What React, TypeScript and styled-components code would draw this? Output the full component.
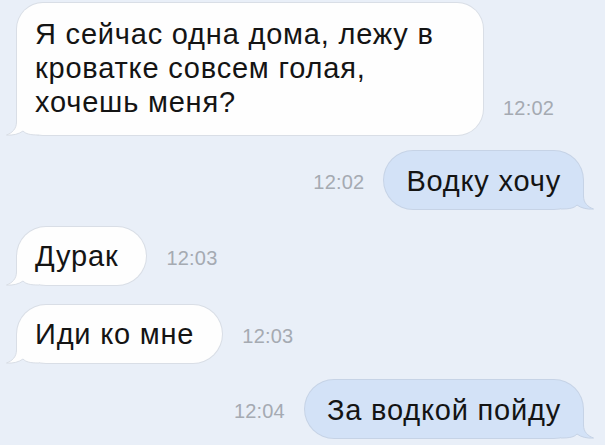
import React from 'react';
import styled, { createGlobalStyle } from 'styled-components';

const GlobalStyle = createGlobalStyle`
  html, body {
    margin: 0;
    padding: 0;
    background: #e9eff8;
  }
  body {
    font-family: "Liberation Sans", Arial, sans-serif;
    -webkit-font-smoothing: antialiased;
  }
`;

const Chat = styled.div`
  width: 605px;
  height: 445px;
  overflow: hidden;
  box-sizing: border-box;
  padding: 3px 22px 0 17px;
  display: flex;
  flex-direction: column;
  background: #e9eff8;
`;

const Row = styled.div<{ $out?: boolean; $top: number }>`
  display: flex;
  align-items: flex-end;
  justify-content: ${({ $out }) => ($out ? 'flex-end' : 'flex-start')};
  gap: 20px;
  margin-top: ${({ $top }) => $top}px;
`;

const Bubble = styled.div<{ $out?: boolean; $width?: number }>`
  position: relative;
  box-sizing: border-box;
  width: ${({ $width }) => ($width ? `${$width}px` : 'auto')};
  min-height: 58px;
  padding: ${({ $out }) => ($out ? '13px 22px 11px 22px' : '12px 28px 12px 18px')};
  border-radius: 29px;
  background: ${({ $out }) => ($out ? '#d3e2f7' : '#fefefe')};
  box-shadow: 0 0 0 1px ${({ $out }) => ($out ? '#c6d3e6' : '#d9dee6')};
  color: #141414;
  font-size: 29px;
  line-height: 34px;
  letter-spacing: 0.8px;
  white-space: nowrap;
`;

const LongBubble = styled(Bubble)`
  border-radius: 26px;
  padding: 14px 20px 16px 18px;
`;

const Text = styled.span`
  position: relative;
  z-index: 1;
`;

const Time = styled.div`
  font-size: 20px;
  line-height: 23px;
  color: #a5aab2;
  margin-bottom: 15px;
  letter-spacing: 0.2px;
`;

const TailSvg = styled.svg<{ $out?: boolean }>`
  position: absolute;
  bottom: -1px;
  ${({ $out }) => ($out ? 'right: -12px; transform: scaleX(-1);' : 'left: -12px;')}
  width: 34px;
  height: 30px;
  overflow: visible;
`;

const Tail: React.FC<{ out?: boolean }> = ({ out }) => {
  const fill = out ? '#d3e2f7' : '#fefefe';
  const stroke = out ? '#c6d3e6' : '#d9dee6';
  return (
    <TailSvg $out={out} viewBox="0 0 34 30">
      <path
        d="M11.5 0 L11.5 16 C11.5 23 7 27 1.5 29 C8 29.6 14 28 18 25 C21 28 25 29 34 29 L34 0 Z"
        fill={fill}
      />
      <path
        d="M11.5 0 L11.5 16 C11.5 23 7 27 1.5 29 C8 29.6 14 28 18 25 C21 28 25 29 34 29"
        fill="none"
        stroke={stroke}
        strokeWidth="1"
      />
    </TailSvg>
  );
};

const App: React.FC = () => {
  return (
    <>
      <GlobalStyle />
      <Chat>
        <Row $top={0}>
          <LongBubble $width={466}>
            <Tail />
            <Text>
              Я сейчас одна дома, лежу в
              <br />
              кроватке совсем голая,
              <br />
              хочешь меня?
            </Text>
          </LongBubble>
          <Time>12:02</Time>
        </Row>
        <Row $out $top={16}>
          <Time>12:02</Time>
          <Bubble $out>
            <Tail out />
            <Text>Водку хочу</Text>
          </Bubble>
        </Row>
        <Row $top={18}>
          <Bubble>
            <Tail />
            <Text>Дурак</Text>
          </Bubble>
          <Time>12:03</Time>
        </Row>
        <Row $top={20}>
          <Bubble>
            <Tail />
            <Text>Иди ко мне</Text>
          </Bubble>
          <Time>12:03</Time>
        </Row>
        <Row $out $top={17}>
          <Time>12:04</Time>
          <Bubble $out>
            <Tail out />
            <Text>За водкой пойду</Text>
          </Bubble>
        </Row>
      </Chat>
    </>
  );
};

export default App;
